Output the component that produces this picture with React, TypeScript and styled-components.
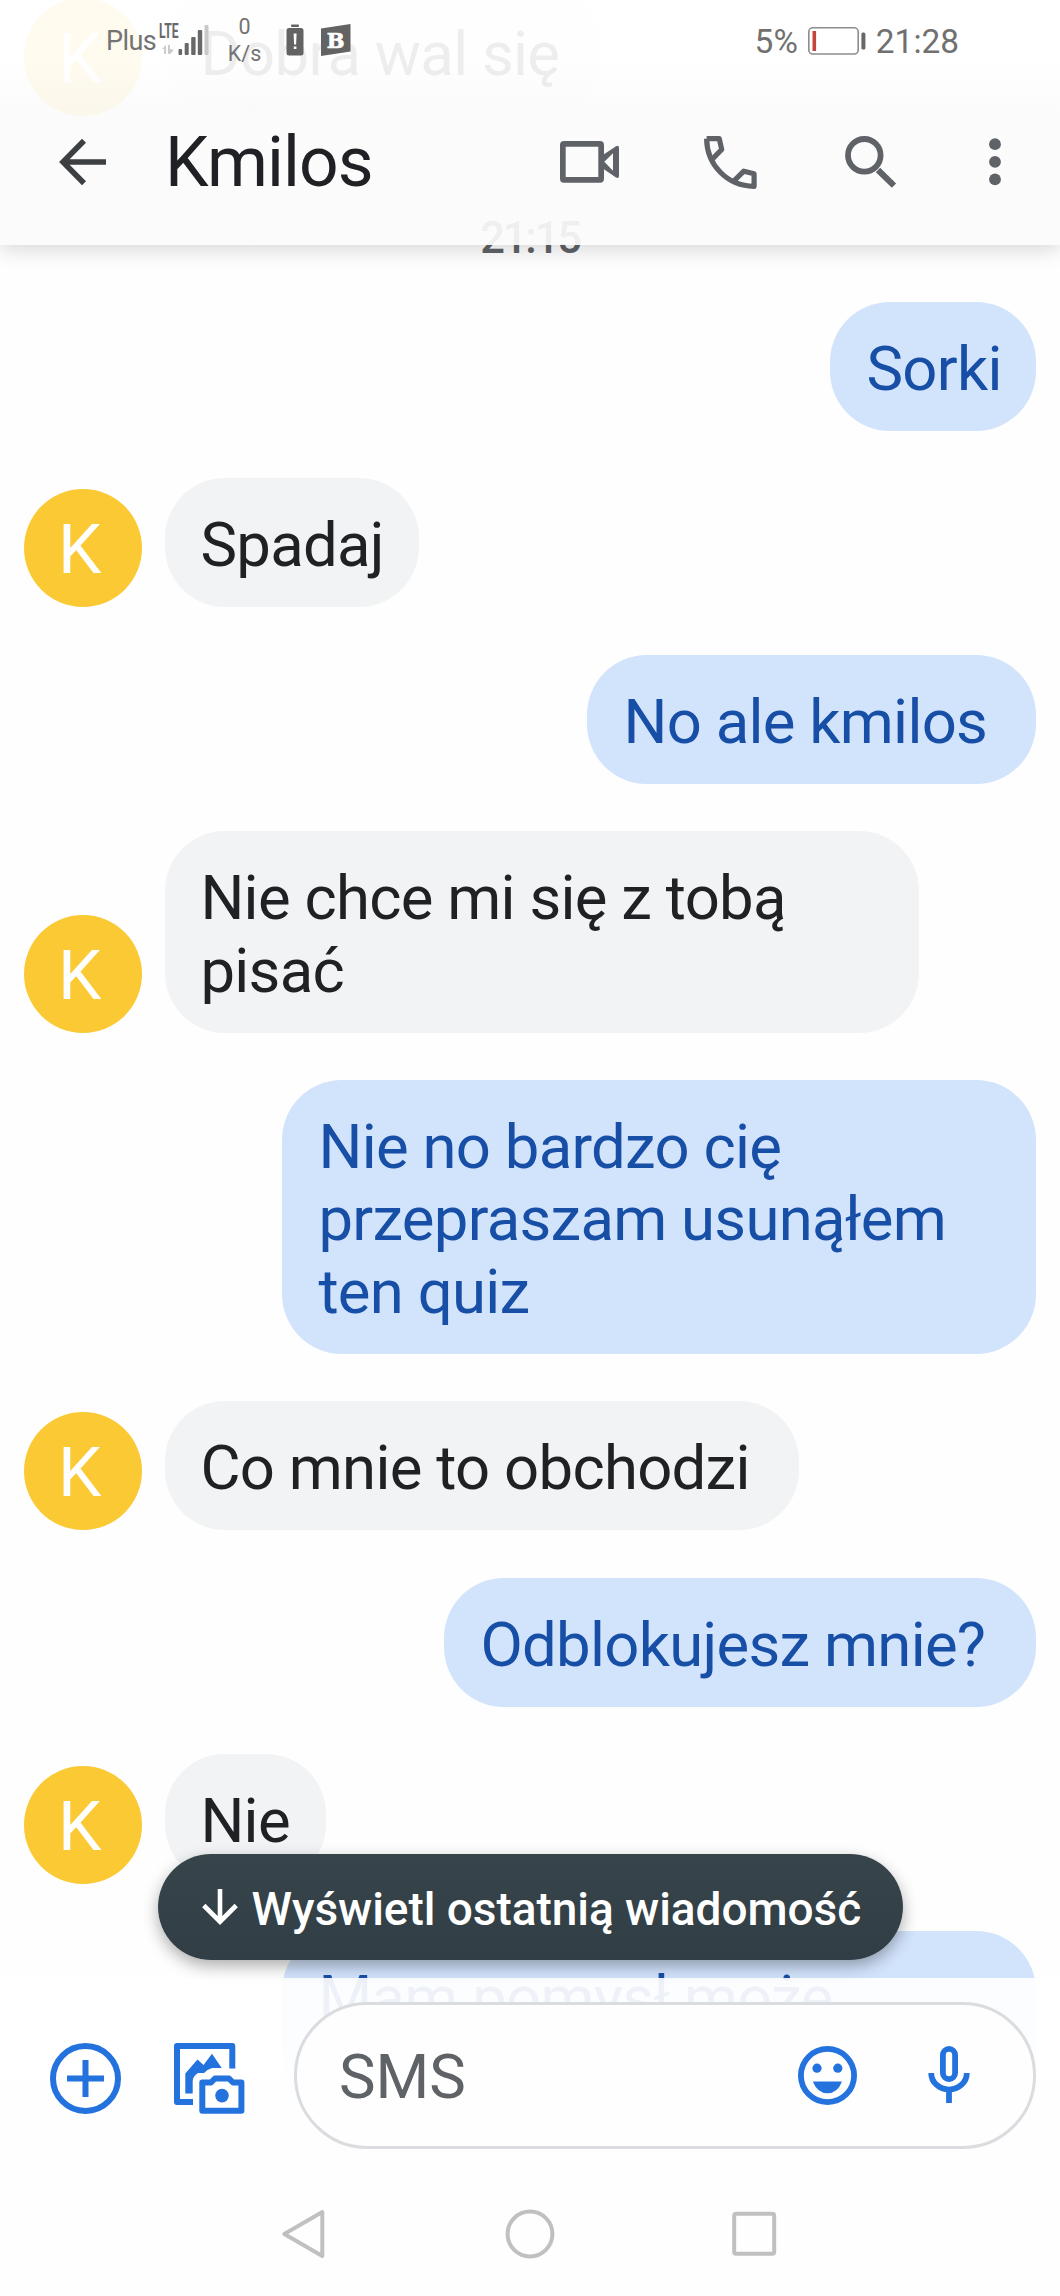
import React from "react";
import styled, { createGlobalStyle } from "styled-components";

const Global = createGlobalStyle`
  * { box-sizing: border-box; }
  body { margin: 0; background: #fefefe; font-family: Roboto, "Liberation Sans", sans-serif; }
`;

const Screen = styled.main`
  position: relative;
  width: 1060px;
  height: 2296px;
  overflow: hidden;
  background: #fefefe;
`;

const Header = styled.header`
  position: absolute;
  inset: 0 0 auto 0;
  z-index: 2;
  height: 244.5px;
  background: linear-gradient(rgba(255, 255, 255, 0.92) 60px, rgba(251, 251, 251, 0.92) 110px);
  box-shadow: 0 4px 20px rgba(0, 0, 0, 0.16);
`;

const StatusBar = styled.div`
  display: flex;
  align-items: center;
  height: 80px;
  padding: 0 101px 0 106px;
  color: #737373;
`;

const Carrier = styled.span`
  width: 53px;
  padding-top: 2px;
  font-size: 27px;
  line-height: 32px;
  letter-spacing: -0.6px;
`;

const Speed = styled.div`
  display: flex;
  flex-direction: column;
  align-items: center;
  width: 34px;
  margin: 0 24px 0 18.5px;
  font-size: 21.5px;
  line-height: 27px;
`;

const StatusIcon = styled.svg`
  display: block;
  flex: none;
  overflow: visible;
  & + & { margin-left: 17px; }
`;

const StatusRight = styled.div`
  display: flex;
  align-items: center;
  gap: 10px;
  margin-left: auto;
  padding-top: 2px;
  font-size: 33.4px;
  font-weight: 400;
  color: #707070;
`;

const AppBar = styled.div`
  display: flex;
  align-items: center;
  height: 164px;
  padding: 0 11px 0 59px;
  color: #5f6368;
`;

const Title = styled.h1`
  flex: 1;
  margin: 0 0 0 58px;
  padding-top: 2px;
  font-size: 69.5px;
  font-weight: 400;
  line-height: 80px;
  letter-spacing: -0.9px;
  color: #202124;
`;

const IconButton = styled.button<{ $width: number }>`
  display: flex;
  align-items: center;
  justify-content: center;
  width: ${(p) => p.$width}px;
  height: 96px;
  padding: 0;
  border: 0;
  background: none;
  color: inherit;
`;

const Icon = styled.svg`
  display: block;
  flex: none;
  overflow: visible;
`;

const Thread = styled.section`
  display: flex;
  flex-direction: column;
  gap: 47.4px;
  margin-top: -13.1px;
  padding: 0 23.6px;
`;

const Row = styled.div<{ $sent?: boolean }>`
  display: flex;
  align-items: flex-end;
  justify-content: ${(p) => (p.$sent ? "flex-end" : "flex-start")};
  gap: 23.4px;
`;

const Avatar = styled.div`
  display: flex;
  align-items: center;
  justify-content: center;
  width: 118px;
  height: 118px;
  padding: 3px 6px 0 0;
  border-radius: 50%;
  background: #fbc934;
  color: #fff;
  font-size: 69px;
  line-height: 115px;
`;

const Bubble = styled.div<{ $sent?: boolean; $width: number }>`
  width: ${(p) => p.$width}px;
  padding: 31px 0 26px ${(p) => (p.$sent ? 36 : 35.4)}px;
  border-radius: 60px;
  background: ${(p) => (p.$sent ? "#d2e3fc" : "#f1f3f4")};
  color: ${(p) => (p.$sent ? "#174ea6" : "#202124")};
  font-size: 61.6px;
  line-height: 72.2px;
  letter-spacing: -0.7px;
  white-space: pre-line;
`;

const Timestamp = styled.time`
  align-self: center;
  height: 90.8px;
  padding-top: 50px;
  font-size: 43.5px;
  font-weight: 500;
  line-height: 50px;
  letter-spacing: -2.2px;
  color: #5f6368;
`;

const JumpButton = styled.button`
  position: absolute;
  top: 1854px;
  left: 157.5px;
  z-index: 3;
  display: flex;
  align-items: center;
  gap: 14px;
  width: 745px;
  height: 106px;
  padding: 0 0 0 44px;
  border: 0;
  border-radius: 53px;
  background: linear-gradient(#37444a, #313e45);
  box-shadow: 0 6px 16px rgba(0, 0, 0, 0.32);
  color: #fff;
  font: 500 46px/54px Roboto, "Liberation Sans", sans-serif;
  white-space: nowrap;
`;

const JumpLabel = styled.span`
  padding-top: 4px;
  letter-spacing: -0.05px;
`;

const Footer = styled.footer`
  position: absolute;
  inset: 1978px 0 0 0;
  z-index: 2;
  background: linear-gradient(rgba(255, 255, 255, 0.925) 24px, rgba(254, 254, 254, 1) 190px);
`;

const Composer = styled.div`
  display: flex;
  align-items: center;
  height: 195px;
  padding: 0 24px 0 50px;
  color: #2372dd;
`;

const Attach = styled.div`
  display: flex;
  gap: 53px;
  padding-top: 5px;
`;

const Field = styled.div`
  display: flex;
  align-items: center;
  width: 742px;
  height: 147px;
  margin-left: auto;
  padding: 0 63.5px 0 42px;
  border: 3px solid #dadce0;
  border-radius: 74px;
  background: #fefefe;
`;

const FieldActions = styled.div`
  display: flex;
  align-items: flex-start;
  gap: 70.5px;
`;

const Placeholder = styled.span`
  flex: 1;
  padding-top: 3px;
  font-size: 61.6px;
  line-height: 72px;
  color: #5f6368;
`;

const NavBar = styled.nav`
  display: flex;
  align-items: center;
  justify-content: center;
  gap: 177px;
  height: 122px;
  color: #c0c0c0;
`;

type Message = { text: string; width: number; sent?: boolean };

const messages: Message[] = [
  { text: "Sorki", width: 206, sent: true },
  { text: "Spadaj", width: 254 },
  { text: "No ale kmilos", width: 449, sent: true },
  { text: "Nie chce mi się z tobą\npisać", width: 754 },
  { text: "Nie no bardzo cię\nprzepraszam usunąłem\nten quiz", width: 754, sent: true },
  { text: "Co mnie to obchodzi", width: 634 },
  { text: "Odblokujesz mnie?", width: 592, sent: true },
  { text: "Nie", width: 161 },
  { text: "Mam pomysł może\n\n\n", width: 754, sent: true },
];

const MessageRow = ({ text, width, sent }: Message) => (
  <Row $sent={sent}>
    {!sent && <Avatar>K</Avatar>}
    <Bubble $sent={sent} $width={width}>{text}</Bubble>
  </Row>
);

const SignalIcon = () => (
  <StatusIcon width="50" height="40" viewBox="0 0 50 40" fill="#686868">
    <text x="0" y="18" fontSize="20" fontWeight="700" textLength="19.6" lengthAdjust="spacingAndGlyphs">LTE</text>
    <path d="M3 29l4-4v9H5v-5zM9 25h2v4l4 1l-4 4h-2z" fill="#cbcbcb" />
    <rect x="19.5" y="29" width="3.6" height="6" rx="1" />
    <rect x="25.7" y="23" width="4" height="12" rx="1" />
    <rect x="32.2" y="17" width="4.4" height="18" rx="1" />
    <rect x="38.8" y="10" width="4.4" height="25" rx="1" />
    <rect x="45.5" y="5" width="4" height="30" rx="1" fill="#c9c9c9" />
  </StatusIcon>
);

const LowBatteryIcon = () => (
  <StatusIcon width="18" height="32" viewBox="0 0 18 32" fill="#636363">
    <rect x="5" y="0.5" width="8" height="2.5" rx="1" />
    <rect x="0.5" y="4" width="17" height="27.5" rx="2.5" />
    <path d="M7.6 9.5h3l-.5 11h-2zM7.8 22.5h2.6v2.6h-2.6z" fill="#fff" />
  </StatusIcon>
);

const BrainlyIcon = () => (
  <StatusIcon width="30" height="32" viewBox="0 0 30 32">
    <path d="M0 4.5L29.5 0V27.5L0 32z" fill="#636363" />
    <text x="14.5" y="23.5" textAnchor="middle" fontFamily="DejaVu Serif, serif" fontWeight="700" fontSize="21" fill="#fff" stroke="#fff" strokeWidth="0.7">B</text>
  </StatusIcon>
);

const BatteryIcon = () => (
  <StatusIcon width="58" height="28" viewBox="0 0 58 28">
    <rect x="0.8" y="0.8" width="49.4" height="26.2" rx="4" fill="none" stroke="#8d8d8d" strokeWidth="1.6" />
    <rect x="4.5" y="4" width="3.6" height="20" fill="#c5443c" />
    <rect x="53.4" y="5.5" width="4" height="17" rx="1.5" fill="#686868" />
  </StatusIcon>
);

const BackIcon = () => (
  <Icon width="48" height="48" viewBox="0 0 48 48" fill="none" stroke="#3c4043" strokeWidth="5.6">
    <path d="M47 24H4.5M25 2.8L4 24L25 45.2" />
  </Icon>
);

const VideoIcon = () => (
  <Icon width="59" height="42" viewBox="0 0 59 42" fill="currentColor" fillRule="evenodd">
    <path d="M4 0H40Q44 0 44 4V13.3L56 5.2Q59 4 59 7V35Q59 38 56 36.6L44 28.3V37.7Q44 41.7 40 41.7H4Q0 41.7 0 37.7V4Q0 0 4 0ZM5.7 5.7V36H38.3V5.7ZM44.3 20.8L53 29.8V12.2Z" />
  </Icon>
);

const PhoneIcon = () => (
  <Icon width="54" height="53" viewBox="0 0 54 53" fill="none" stroke="currentColor" strokeWidth="5.2" strokeLinejoin="round">
    <path d="M3.6 2.7H16.3L18.7 13.5L10 22.4" />
    <path d="M3.6 2.7C4 29 24 50 51.1 50.3V37.8L40.8 35.2L31.5 44.3" />
  </Icon>
);

const SearchIcon = () => (
  <Icon width="52" height="52" viewBox="0 0 52 52" fill="none" stroke="currentColor">
    <circle cx="19.3" cy="19.3" r="16.3" strokeWidth="5.8" />
    <path d="M33 34L49 49.6" strokeWidth="6.2" />
  </Icon>
);

const MoreIcon = () => (
  <Icon width="12" height="48" viewBox="0 0 12 48" fill="currentColor">
    <circle cx="6" cy="6.2" r="5.9" />
    <circle cx="6" cy="23.8" r="5.9" />
    <circle cx="6" cy="41.4" r="5.9" />
  </Icon>
);

const PlusIcon = () => (
  <Icon width="71" height="71" viewBox="0 0 71 71" fill="none" stroke="currentColor" strokeWidth="6">
    <circle cx="35.5" cy="35.5" r="32.5" />
    <path d="M17 35.5H54M35.5 17V54" />
  </Icon>
);

const GalleryIcon = () => (
  <Icon width="71" height="71" viewBox="0 0 71 71" fill="none" stroke="currentColor" strokeWidth="6" strokeLinejoin="round">
    <path d="M19 59H3V3H58.3V25.5" />
    <path d="M11.3 50.5V30.5L23.5 16.5L29.5 22L38 10.7L47.7 25H38Q33 26.5 30 30H24Q19 33 18.7 38V50.5Z" fill="currentColor" stroke="none" />
    <path d="M28.3 67.7V39.5H37L41 35.5H55L59 39.5H67.4V67.7Z" />
    <circle cx="48" cy="52.6" r="6.8" fill="currentColor" stroke="none" />
  </Icon>
);

const SmileIcon = () => (
  <Icon width="59" height="59" viewBox="0 0 59 59" fill="currentColor">
    <circle cx="29.5" cy="29.5" r="26.6" fill="none" stroke="currentColor" strokeWidth="5.8" />
    <circle cx="19" cy="22.2" r="4.6" />
    <circle cx="39.8" cy="22.2" r="4.6" />
    <path d="M14.8 35.5H44Q39.5 47.3 29.5 47.3T14.8 35.5Z" />
  </Icon>
);

const MicIcon = () => (
  <Icon width="42" height="57" viewBox="0 0 42 57" fill="none" stroke="currentColor" strokeWidth="5.8">
    <rect x="14.9" y="2.9" width="12.2" height="30.2" rx="6.1" />
    <path d="M3.2 27A17.8 16.6 0 0 0 38.8 27M21 43.5V57" />
  </Icon>
);

export default function App() {
  return (
    <Screen>
      <Global />
      <Header>
        <StatusBar>
          <Carrier>Plus</Carrier>
          <SignalIcon />
          <Speed><span>0</span><span>K/s</span></Speed>
          <LowBatteryIcon />
          <BrainlyIcon />
          <StatusRight>
            <span>5%</span>
            <BatteryIcon />
            <span>21:28</span>
          </StatusRight>
        </StatusBar>
        <AppBar>
          <BackIcon />
          <Title>Kmilos</Title>
          <IconButton $width={140.6}><VideoIcon /></IconButton>
          <IconButton $width={140.6}><PhoneIcon /></IconButton>
          <IconButton $width={140.6}><SearchIcon /></IconButton>
          <IconButton $width={108}><MoreIcon /></IconButton>
        </AppBar>
      </Header>
      <Thread>
        <MessageRow text="Dobra wal się" width={436} />
        <Timestamp>21:15</Timestamp>
        {messages.map((m) => <MessageRow key={m.text} {...m} />)}
      </Thread>
      <JumpButton>
        <Icon width="36" height="36" viewBox="0 0 36 36" fill="none" stroke="currentColor" strokeWidth="4.6">
          <path d="M18 0V33M1.8 16.5L18 32.7L34.2 16.5" />
        </Icon>
        <JumpLabel>Wyświetl ostatnią wiadomość</JumpLabel>
      </JumpButton>
      <Footer>
        <Composer>
          <Attach>
            <PlusIcon />
            <GalleryIcon />
          </Attach>
          <Field>
            <Placeholder>SMS</Placeholder>
            <FieldActions>
              <SmileIcon />
              <MicIcon />
            </FieldActions>
          </Field>
        </Composer>
        <NavBar>
          <Icon width="50" height="50" viewBox="0 0 50 50" fill="none" stroke="currentColor" strokeWidth="4" strokeLinejoin="round">
            <path d="M44.3 3V47L6.3 25Z" />
          </Icon>
          <Icon width="50" height="50" viewBox="0 0 50 50" fill="none" stroke="currentColor" strokeWidth="4">
            <circle cx="25" cy="25" r="22.4" />
          </Icon>
          <Icon width="50" height="50" viewBox="0 0 50 50" fill="none" stroke="currentColor" strokeWidth="4">
            <rect x="2.2" y="4.8" width="40" height="40" rx="2" />
          </Icon>
        </NavBar>
      </Footer>
    </Screen>
  );
}
